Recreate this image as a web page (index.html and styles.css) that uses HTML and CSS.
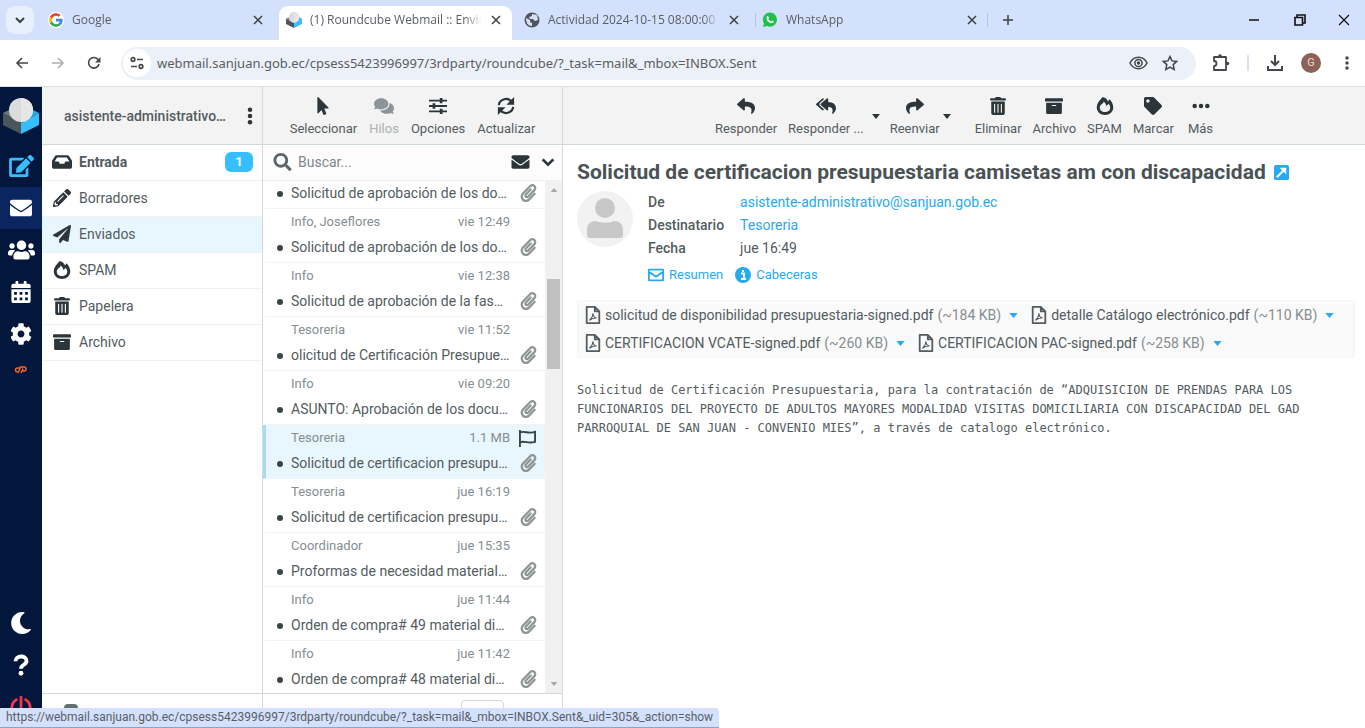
FILE: index.html
```html
<!DOCTYPE html>
<html lang="es">

<head>
    <meta charset="UTF-8">
    <meta name="viewport" content="width=device-width, initial-scale=1.0">
    <title>(1) Roundcube Webmail :: Enviados</title>
    <link rel="stylesheet" href="styles.css">
</head>

<body>
    <!-- iconos -->
    <svg class="sprite" aria-hidden="true">
        <symbol id="i-envelope" viewBox="0 0 512 512"><path d="M502.3 190.8c3.9-3.1 9.7-.2 9.7 4.7V400c0 26.5-21.5 48-48 48H48c-26.5 0-48-21.5-48-48V195.6c0-5 5.7-7.8 9.7-4.7 22.4 17.4 52.1 39.5 154.1 113.6 21.1 15.4 56.7 47.8 92.2 47.6 35.7.3 72-32.8 92.3-47.6 102-74.1 131.6-96.3 154-113.7zM256 320c23.2.4 56.6-29.2 73.4-41.4 132.7-96.3 142.8-104.7 173.4-128.7 5.8-4.5 9.2-11.5 9.2-18.9v-19c0-26.5-21.5-48-48-48H48c-26.5 0-48 21.5-48 48v19c0 7.4 3.4 14.3 9.2 18.9 30.6 23.9 40.7 32.4 173.4 128.7 16.8 12.2 50.2 41.8 73.4 41.4z"/></symbol>
        <symbol id="i-edit" viewBox="0 0 576 512"><path d="M402.6 83.2l90.2 90.2c3.8 3.8 3.8 10 0 13.8L274.4 405.6l-92.8 10.3c-12.4 1.4-22.9-9.1-21.5-21.5l10.3-92.8L388.8 83.2c3.8-3.8 10-3.8 13.8 0zm162-22.9l-48.8-48.8c-15.2-15.2-39.9-15.2-55.2 0l-35.4 35.4c-3.8 3.8-3.8 10 0 13.8l90.2 90.2c3.8 3.8 10 3.8 13.8 0l35.4-35.4c15.2-15.3 15.2-40 0-55.2zM384 346.2V448H64V128h229.8c3.2 0 6.2-1.3 8.5-3.5l40-40c7.6-7.6 2.2-20.5-8.5-20.5H48C21.5 64 0 85.5 0 112v352c0 26.5 21.5 48 48 48h352c26.5 0 48-21.5 48-48V306.2c0-10.7-12.9-16-20.5-8.5l-40 40c-2.2 2.3-3.5 5.3-3.5 8.5z"/></symbol>
        <symbol id="i-users" viewBox="0 0 640 512"><path d="M96 224c35.300 0 64-28.700 64-64s-28.700-64-64-64-64 28.700-64 64 28.700 64 64 64zm448 0c35.300 0 64-28.700 64-64s-28.700-64-64-64-64 28.700-64 64 28.700 64 64 64zm32 32h-64c-17.600 0-33.500 7.100-45.100 18.600 40.300 22.100 68.900 62 75.100 109.400h66c17.700 0 32-14.300 32-32v-32c0-35.300-28.700-64-64-64zm-256 0c61.900 0 112-50.100 112-112S381.900 32 320 32 208 82.100 208 144s50.100 112 112 112zm76.800 32h-8.300c-20.800 10-43.900 16-68.500 16s-47.600-6-68.500-16h-8.300C179.600 288 128 339.600 128 403.200V432c0 26.500 21.500 48 48 48h288c26.500 0 48-21.500 48-48v-28.800c0-63.600-51.600-115.200-115.200-115.200zm-223.700-13.400C161.500 263.100 145.600 256 128 256H64c-35.300 0-64 28.700-64 64v32c0 17.700 14.300 32 32 32h65.900c6.300-47.400 34.900-87.300 75.200-109.400z"/></symbol>
        <symbol id="i-calendar" viewBox="0 0 448 512"><path fill-rule="evenodd" d="M48 64h48V16c0-9 7-16 16-16h32c9 0 16 7 16 16v48h128V16c0-9 7-16 16-16h32c9 0 16 7 16 16v48h48c26 0 48 22 48 48v48H0v-48c0-26 22-48 48-48zM0 192h448v272c0 26-22 48-48 48H48c-26 0-48-22-48-48zM64 256v64h64v-64zm128 0v64h64v-64zm128 0v64h64v-64zM64 384v64h64v-64zm128 0v64h64v-64zm128 0v64h64v-64z"/></symbol>
        <symbol id="i-cog" viewBox="0 0 512 512"><path d="M487.4 315.7l-42.6-24.6c4.3-23.2 4.3-47 0-70.2l42.6-24.6c4.900-2.800 7.100-8.600 5.500-14-11.100-35.600-30-67.800-54.700-94.600-3.800-4.100-10-5.100-14.800-2.300L380.800 110c-17.900-15.400-38.500-27.300-60.800-35.100V25.800c0-5.600-3.900-10.500-9.400-11.700-36.700-8.200-74.300-7.800-109.200 0-5.500 1.200-9.400 6.100-9.400 11.700V75c-22.200 7.900-42.800 19.800-60.800 35.100L88.700 85.500c-4.900-2.800-11-1.900-14.800 2.300-24.700 26.700-43.600 58.900-54.700 94.600-1.700 5.400.6 11.200 5.500 14L67.300 221c-4.300 23.200-4.300 47 0 70.200l-42.600 24.600c-4.900 2.800-7.100 8.600-5.500 14 11.100 35.600 30 67.800 54.700 94.600 3.800 4.100 10 5.100 14.800 2.300l42.600-24.600c17.900 15.400 38.500 27.300 60.800 35.100v49.200c0 5.600 3.900 10.500 9.400 11.700 36.700 8.200 74.300 7.800 109.200 0 5.500-1.200 9.400-6.100 9.400-11.700v-49.200c22.200-7.900 42.800-19.800 60.800-35.100l42.600 24.600c4.900 2.800 11 1.900 14.800-2.300 24.700-26.700 43.600-58.900 54.700-94.600 1.500-5.500-.7-11.300-5.600-14.100zM256 336c-44.100 0-80-35.900-80-80s35.900-80 80-80 80 35.900 80 80-35.900 80-80 80z"/></symbol>
        <symbol id="i-moon" viewBox="0 0 512 512"><path d="M283.211 512c78.962 0 151.079-35.925 198.857-94.792 7.068-8.708-.639-21.430-11.562-19.350-124.203 23.654-238.262-71.576-238.262-196.954 0-72.222 38.662-138.635 101.498-174.394 9.686-5.512 7.250-20.197-3.756-22.230A258.156 258.156 0 0 0 283.211 0c-141.309 0-256 114.511-256 256 0 141.309 114.511 256 256 256z"/></symbol>
        <symbol id="i-question" viewBox="0 0 24 24"><path d="M6 8c0-7 12-7 12-.5 0 4.500-6 4-6 8.500" fill="none" stroke="currentColor" stroke-width="4.200"/><circle cx="12" cy="21" r="2.600"/></symbol>
        <symbol id="i-power" viewBox="0 0 24 24"><path d="M7 4a10 10 0 1 0 10 0M12 1v11" fill="none" stroke="currentColor" stroke-width="3" stroke-linecap="round"/></symbol>
        <symbol id="i-cpanel" viewBox="0 0 28 18"><path d="M12 5H7a4 4 0 0 0 0 8h2l4-10h7a4 4 0 0 1 0 8h-3M14 15l4-9" fill="none" stroke="currentColor" stroke-width="3"/></symbol>
        <symbol id="i-inbox" viewBox="0 0 576 512"><path fill-rule="evenodd" d="M128 64h320c16 0 30 8 39 21l81 122c5 8 8 17 8 27v166c0 27-21 48-48 48H48c-27 0-48-21-48-48V234c0-10 3-19 8-27L89 85c9-13 23-21 39-21zm17 64L77 240h115l32 64h128l32-64h115l-68-112z"/></symbol>
        <symbol id="i-pencil" viewBox="0 0 512 512"><path d="M497.900 142.100l-46.100 46.100c-4.700 4.700-12.300 4.700-17 0l-111-111c-4.700-4.700-4.700-12.300 0-17l46.100-46.100c18.700-18.700 49.100-18.700 67.900 0l60.100 60.100c18.800 18.700 18.800 49.100 0 67.900z"/><path fill-rule="evenodd" d="M284 100L22 362 .4 484c-3 16 11 31 28 28l121-22 263-262c5-5 5-12 0-17l-111-111c-5-5-13-5-17 0zM124 340l154-154c14-14 34 6 20 20L144 360c-14 14-34-6-20-20zM88 424h48v36l-65 12-31-31 12-65h36z"/></symbol>
        <symbol id="i-plane" viewBox="0 0 512 512"><path d="M476 3.200L12.500 270.600c-18.100 10.400-15.800 35.600 2.200 43.200L121 358.400l287.300-253.200c5.500-4.900 13.300 2.600 8.600 8.300L176 407v80.500c0 23.600 28.500 32.900 42.500 15.800L282 426l124.600 52.200c14.200 6 30.400-2.900 33-18.200l72-432C515 7.800 493.300-6.800 476 3.200z"/></symbol>
        <symbol id="i-fire" viewBox="0 0 24 24"><path fill-rule="evenodd" d="M9 0c4 1 6 3 7 6l2-3c3 3 5 7 5 11 0 6-5 10-11 10S1 20 1 14C1 9 4 5 9 0zM8 9c-2 2-3 3-3 5 0 4 3 6 7 6s7-2 7-6c0-2-1-3-2-5l-3 3c-1-3-2-5-4-6 0 2-1 3-2 3z"/></symbol>
        <symbol id="i-trash" viewBox="0 0 448 512"><path d="M32 464a48 48 0 0 0 48 48h288a48 48 0 0 0 48-48V128H32zm272-256a16 16 0 0 1 32 0v224a16 16 0 0 1-32 0zm-96 0a16 16 0 0 1 32 0v224a16 16 0 0 1-32 0zm-96 0a16 16 0 0 1 32 0v224a16 16 0 0 1-32 0zM432 32H312l-9.400-18.700A24 24 0 0 0 281.100 0H166.800a23.720 23.720 0 0 0-21.400 13.300L136 32H16A16 16 0 0 0 0 48v32a16 16 0 0 0 16 16h416a16 16 0 0 0 16-16V48a16 16 0 0 0-16-16z"/></symbol>
        <symbol id="i-archive" viewBox="0 0 512 512"><path d="M32 448c0 17.700 14.300 32 32 32h384c17.700 0 32-14.300 32-32V160H32v288zm160-212c0-6.600 5.400-12 12-12h104c6.600 0 12 5.400 12 12v8c0 6.600-5.400 12-12 12H204c-6.600 0-12-5.400-12-12v-8zM480 32H32C14.300 32 0 46.300 0 64v48c0 8.800 7.200 16 16 16h480c8.800 0 16-7.200 16-16V64c0-17.700-14.300-32-32-32z"/></symbol>
        <symbol id="i-pointer" viewBox="0 0 320 512"><path d="M302.189 329.126H196.105l55.831 135.993c3.889 9.428-.555 19.999-9.444 23.999l-49.165 21.427c-9.165 4-19.443-.571-23.332-9.714l-53.053-129.136-86.664 89.138C18.729 472.710 0 463.554 0 447.977V18.299C0 1.899 19.921-6.096 30.277 5.443l284.412 292.542c11.472 11.179 3.007 31.141-12.500 31.141z"/></symbol>
        <symbol id="i-comments" viewBox="0 0 576 512"><path d="M416 192c0-88.400-93.100-160-208-160S0 103.600 0 192c0 34.300 14.100 65.900 38 92-13.400 30.200-35.500 54.200-35.800 54.500-2.200 2.300-2.800 5.700-1.500 8.700S4.800 352 8 352c36.600 0 66.900-12.300 88.700-25 32.200 15.700 70.300 25 111.300 25 114.900 0 208-71.600 208-160zm122 220c23.900-26 38-57.700 38-92 0-66.900-53.500-124.200-129.300-148.100.9 6.600 1.300 13.300 1.300 20.100 0 105.900-107.700 192-240 192-10.800 0-21.300-.8-31.700-1.900C207.800 439.600 281.800 480 368 480c41 0 79.100-9.200 111.300-25 21.800 12.700 52.100 25 88.700 25 3.200 0 6.100-1.900 7.300-4.800 1.300-2.900.7-6.300-1.500-8.700-.3-.3-22.400-24.200-35.800-54.500z"/></symbol>
        <symbol id="i-sliders" viewBox="0 0 20 20"><path d="M0 4h20M0 10h20M0 16h20" stroke="currentColor" stroke-width="2"/><path d="M12 1h3v6h-3zM4 7h3v6H4zM12 13h3v6h-3z"/></symbol>
        <symbol id="i-sync" viewBox="0 0 20 20"><path d="M2 9c1-7 10-9 14-4l2 2M18 11c-1 7-10 9-14 4l-2-2" fill="none" stroke="currentColor" stroke-width="2.500"/><path d="M19 0v8.500h-8.500zM1 20v-8.500h8.500z"/></symbol>
        <symbol id="i-reply" viewBox="0 0 512 512"><path d="M8.309 189.836L184.313 37.851C199.719 24.546 224 35.347 224 56.015v80.053c160.629 1.839 288 34.032 288 186.258 0 61.441-39.581 122.309-83.333 154.132-13.653 9.931-33.111-2.533-28.077-18.631 45.344-145.012-21.507-183.510-176.590-185.742V360c0 20.700-24.300 31.453-39.687 18.164l-176.004-152c-11.071-9.562-11.086-26.753 0-36.328z"/></symbol>
        <symbol id="i-reply-all" viewBox="0 0 576 512"><path d="M136.309 189.836L312.313 37.851C327.720 24.546 352 35.348 352 56.015v82.763c129.182 10.231 224 52.212 224 183.548 0 61.441-39.582 122.309-83.333 154.132-13.653 9.931-33.111-2.533-28.077-18.631 38.512-123.162-3.922-169.482-112.590-182.015v84.175c0 20.701-24.300 31.453-39.687 18.164L136.309 226.164c-11.071-9.561-11.086-26.753 0-36.328zm-128 36.328L184.313 378.150C199.700 391.439 224 380.687 224 359.986v-15.818l-108.606-93.785A55.960 55.960 0 0 1 96 207.998a55.953 55.953 0 0 1 19.393-42.380L224 71.832V56.015c0-20.667-24.280-31.469-39.687-18.164L8.309 189.836c-11.086 9.575-11.071 26.767 0 36.328z"/></symbol>
        <symbol id="i-forward" viewBox="0 0 512 512"><use href="#i-reply" width="512" height="512" transform="matrix(-1 0 0 1 512 0)"/></symbol>
        <symbol id="i-tag" viewBox="0 0 512 512"><path d="M0 252.118V48C0 21.490 21.490 0 48 0h204.118a48 48 0 0 1 33.941 14.059l211.882 211.882c18.745 18.745 18.745 49.137 0 67.882L293.823 497.941c-18.745 18.745-49.137 18.745-67.882 0L14.059 286.059A48 48 0 0 1 0 252.118zM112 64c-26.510 0-48 21.490-48 48s21.490 48 48 48 48-21.490 48-48-21.490-48-48-48z"/></symbol>
        <symbol id="i-dots" viewBox="0 0 20 20"><circle cx="3" cy="10" r="2.500"/><circle cx="10" cy="10" r="2.500"/><circle cx="17" cy="10" r="2.500"/></symbol>
        <symbol id="i-vdots" viewBox="0 0 20 20"><circle cx="10" cy="3" r="2.500"/><circle cx="10" cy="10" r="2.500"/><circle cx="10" cy="17" r="2.500"/></symbol>
        <symbol id="i-search" viewBox="0 0 512 512"><path d="M505 442.700L405.300 343c-4.500-4.500-10.600-7-17-7H372c27.600-35.300 44-79.700 44-128C416 93.100 322.900 0 208 0S0 93.100 0 208s93.100 208 208 208c48.300 0 92.700-16.400 128-44v16.300c0 6.400 2.500 12.500 7 17l99.700 99.700c9.400 9.400 24.600 9.400 33.900 0l28.300-28.300c9.400-9.400 9.400-24.600.1-34zM208 336c-70.700 0-128-57.200-128-128 0-70.700 57.200-128 128-128 70.700 0 128 57.200 128 128 0 70.700-57.200 128-128 128z"/></symbol>
        <symbol id="i-chevron" viewBox="0 0 12 12"><path d="M2 4l4 4 4-4" fill="none" stroke="currentColor" stroke-width="2"/></symbol>
        <symbol id="i-clip" viewBox="0 0 448 512"><path d="M43.246 466.142c-58.430-60.289-57.341-157.511 1.386-217.581L254.392 34c44.316-45.332 116.351-45.336 160.671 0 43.890 44.894 43.943 117.329 0 162.276L232.214 383.128c-29.855 30.537-78.633 30.111-107.982-.998-28.275-29.970-27.368-77.473 1.452-106.953l143.743-146.835c6.182-6.314 16.312-6.422 22.626-.241l22.861 22.379c6.315 6.182 6.422 16.312.241 22.626L171.427 319.927c-4.932 5.045-5.236 13.428-.648 18.292 4.372 4.634 11.245 4.711 15.688.165l182.849-186.851c19.613-20.062 19.613-52.725-.011-72.798-19.189-19.627-49.957-19.637-69.154 0L90.390 293.295c-34.763 35.560-35.299 93.120-1.191 128.313 34.010 35.093 88.985 35.137 123.058.286l172.060-175.999c6.177-6.319 16.307-6.433 22.626-.256l22.877 22.364c6.319 6.177 6.434 16.307.256 22.626l-172.060 175.998c-59.576 60.938-155.943 60.216-214.770-.485z"/></symbol>
        <symbol id="i-flag" viewBox="0 0 20 18"><path d="M2 0v18M2 2.500c5-2 9 2 16-.5v10.500c-7 2.500-11-1.500-16 .5" fill="none" stroke="currentColor" stroke-width="2"/></symbol>
        <symbol id="i-pdf" viewBox="0 0 16 20"><path d="M1 1h9l5 5v13H1zM10 1v5h5" fill="none" stroke="currentColor" stroke-width="2" stroke-linejoin="round"/><path d="M4 16c2-2 4-5 4-8 0 4 2 5 4 5-3 0-6 1-8 3z" fill="none" stroke="currentColor" stroke-width="1.200"/></symbol>
        <symbol id="i-mail-line" viewBox="0 0 18 14"><path d="M1 1h16v12H1zM1 3l8 6 8-6" fill="none" stroke="currentColor" stroke-width="2" stroke-linejoin="round"/></symbol>
        <symbol id="i-info" viewBox="0 0 16 16"><circle cx="8" cy="8" r="8"/><path d="M6 6.500h3V12M6 12h5M7 4h2" stroke="#fff" stroke-width="1.800" fill="none"/></symbol>
        <symbol id="i-ext" viewBox="0 0 16 16"><rect width="16" height="16" rx="2"/><path d="M3 13l7-7" stroke="#fff" stroke-width="2.200"/><path d="M6 3h7v7z" fill="#fff"/></symbol>
        <symbol id="i-caret" viewBox="0 0 10 6"><path d="M0 0h10L5 6z"/></symbol>
        <symbol id="i-close" viewBox="0 0 12 12"><path d="M2 2l8 8M10 2l-8 8" stroke="currentColor" stroke-width="1.500"/></symbol>
        <symbol id="i-left" viewBox="0 0 14 14"><path d="M13 7H2M7 2L2 7l5 5" fill="none" stroke="currentColor" stroke-width="1.600"/></symbol>
        <symbol id="i-right" viewBox="0 0 14 14"><path d="M1 7h11M7 2l5 5-5 5" fill="none" stroke="currentColor" stroke-width="1.600"/></symbol>
        <symbol id="i-reload" viewBox="0 0 14 14"><path d="M12 8a5.300 5.300 0 1 1-1-4.500l1.500 1.500" fill="none" stroke="currentColor" stroke-width="1.600"/><path d="M13.500 1v5.500H8z"/></symbol>
        <symbol id="i-tune" viewBox="0 0 14 14"><g fill="none" stroke="currentColor" stroke-width="1.700"><circle cx="3" cy="3.500" r="1.800"/><path d="M7 3.500h6M1 10.500h6"/><circle cx="11" cy="10.500" r="1.800"/></g></symbol>
        <symbol id="i-eye" viewBox="0 0 20 14"><g fill="none" stroke="currentColor" stroke-width="1.600"><path d="M1 7c4-8 14-8 18 0-4 8-14 8-18 0z"/><circle cx="10" cy="7" r="3.800"/></g><circle cx="10" cy="7" r="1.800"/></symbol>
        <symbol id="i-star" viewBox="0 0 16 16"><path d="M8 1.500l2 4.400 4.700.5-3.500 3.200 1 4.800L8 12l-4.200 2.400 1-4.800L1.300 6.400 6 5.900z" fill="none" stroke="currentColor" stroke-width="1.500"/></symbol>
        <symbol id="i-puzzle" viewBox="0 0 18 18"><path d="M2 3h12v13H2v-4a2.500 2.500 0 0 0 0-5z" fill="none" stroke="currentColor" stroke-width="1.800" stroke-linejoin="round"/><circle cx="8" cy="2" r="1.800"/><circle cx="15.500" cy="9.500" r="1.800"/></symbol>
        <symbol id="i-download" viewBox="0 0 18 18"><path d="M9 1v9M5 7l4 4 4-4M2 12v4h14v-4" fill="none" stroke="currentColor" stroke-width="2"/></symbol>
        <symbol id="i-cube" viewBox="0 0 36 36"><path d="M0 15l18 10v11L0 27z" fill="#49575c"/><path d="M36 15L18 25v11l18-9z" fill="#37beff"/><path d="M0 15l8-4 10 8v6z" fill="#6b797e"/><path d="M36 15l-8-4-10 8v6z" fill="#2aa9e8"/><circle cx="18" cy="12" r="12" fill="#dcdcdc"/><path d="M18 0a12 12 0 0 1 0 24z" fill="#e6e6e6"/></symbol>
        <symbol id="i-google" viewBox="0 0 48 48"><path fill="#ea4335" d="M24 9.500c3.540 0 6.710 1.220 9.210 3.600l6.850-6.850C35.900 2.380 30.470 0 24 0 14.620 0 6.510 5.380 2.560 13.220l7.980 6.190C12.430 13.720 17.740 9.500 24 9.500z"/><path fill="#4285f4" d="M46.980 24.550c0-1.570-.15-3.090-.38-4.550H24v9.020h12.940c-.58 2.960-2.260 5.480-4.780 7.180l7.730 6c4.510-4.180 7.090-10.360 7.090-17.650z"/><path fill="#fbbc05" d="M10.530 28.590c-.48-1.450-.76-2.990-.76-4.590s.27-3.140.76-4.590l-7.980-6.190C.92 16.460 0 20.120 0 24c0 3.880.92 7.540 2.560 10.780l7.970-6.190z"/><path fill="#34a853" d="M24 48c6.480 0 11.930-2.130 15.890-5.810l-7.730-6c-2.150 1.450-4.920 2.300-8.160 2.300-6.260 0-11.570-4.220-13.470-9.910l-7.980 6.190C6.510 42.620 14.620 48 24 48z"/></symbol>
        <symbol id="i-globe" viewBox="0 0 16 16"><circle cx="8" cy="8" r="7.500" fill="#50565c"/><path d="M2 6l4 2v2l2 1v3c-4 0-6-3-6-8zM8 2l5 1 1 5-3 1-2-2H6l-1-2 3-1z" fill="#d3e1fd"/></symbol>
        <symbol id="i-whatsapp" viewBox="0 0 16 16"><path d="M1 15l1-3.600A7 7 0 1 1 5 14z" fill="#20c148"/><path d="M5 4.500c1-1 1.500 0 2 1.300L6.300 7c.6 1.200 1.400 2 2.700 2.600l1-1c1.500.5 2.300 1 1.500 2-3 2.500-8.500-2.600-6.500-6.100z" fill="#fff"/></symbol>
    </svg>

    <!-- navegador -->
    <div class="tabs">
        <button class="tab-search" aria-label="Buscar pestañas"><svg><use href="#i-chevron"/></svg></button>
        <div class="tab"><svg class="fav fav-white"><use href="#i-google"/></svg><span>Google</span><button aria-label="Cerrar"><svg><use href="#i-close"/></svg></button></div>
        <div class="tab active"><svg class="fav"><use href="#i-cube"/></svg><span>(1) Roundcube Webmail :: Enviados</span><button aria-label="Cerrar"><svg><use href="#i-close"/></svg></button></div>
        <div class="tab"><svg class="fav"><use href="#i-globe"/></svg><span>Actividad 2024-10-15 08:00:00 | Mi</span><button aria-label="Cerrar"><svg><use href="#i-close"/></svg></button></div>
        <div class="tab line"><svg class="fav"><use href="#i-whatsapp"/></svg><span>WhatsApp</span><button aria-label="Cerrar"><svg><use href="#i-close"/></svg></button></div>
        <button class="tab-new" aria-label="Nueva pestaña"><svg viewBox="0 0 12 12"><path d="M6 1v10M1 6h10" stroke="currentColor" stroke-width="1.500"/></svg></button>
        <div class="window-btns">
            <button aria-label="Minimizar"><svg viewBox="0 0 12 12"><path d="M1 6h10" stroke="currentColor" stroke-width="1.500"/></svg></button>
            <button aria-label="Restaurar"><svg viewBox="0 0 12 12"><path d="M1 3.500h7.500V11H1zM3 3.500V1h8v8H8.500" fill="none" stroke="currentColor" stroke-width="1.600"/></svg></button>
            <button aria-label="Cerrar ventana"><svg viewBox="0 0 12 12"><path d="M1 1l10 10M11 1L1 11" stroke="currentColor" stroke-width="1.200"/></svg></button>
        </div>
    </div>
    <div class="nav">
        <button aria-label="Atrás"><svg><use href="#i-left"/></svg></button>
        <button aria-label="Adelante" class="off"><svg><use href="#i-right"/></svg></button>
        <button aria-label="Recargar"><svg><use href="#i-reload"/></svg></button>
        <div class="omnibox">
            <button class="site" aria-label="Información del sitio"><svg><use href="#i-tune"/></svg></button>
            <input type="text" aria-label="Dirección" value="webmail.sanjuan.gob.ec/cpsess5423996997/3rdparty/roundcube/?_task=mail&amp;_mbox=INBOX.Sent">
            <button aria-label="Incógnito"><svg class="eye"><use href="#i-eye"/></svg></button>
            <button aria-label="Marcador"><svg class="star"><use href="#i-star"/></svg></button>
        </div>
        <div class="nav-right">
            <button aria-label="Extensiones"><svg><use href="#i-puzzle"/></svg></button>
            <i class="nav-sep"></i>
            <button aria-label="Descargas"><svg><use href="#i-download"/></svg></button>
            <button class="profile">G</button>
            <button aria-label="Menú"><svg class="kebab"><use href="#i-vdots"/></svg></button>
        </div>
    </div>

    <div class="app">
        <!-- menu de tareas -->
        <nav class="tasks">
            <a href="#" class="logo" aria-label="Roundcube"><svg><use href="#i-cube"/></svg></a>
            <a href="#" class="compose" aria-label="Redactar"><svg><use href="#i-edit"/></svg></a>
            <a href="#" class="selected" aria-label="Correo"><svg><use href="#i-envelope"/></svg></a>
            <a href="#" class="wide" aria-label="Contactos"><svg><use href="#i-users"/></svg></a>
            <a href="#" aria-label="Calendario"><svg><use href="#i-calendar"/></svg></a>
            <a href="#" aria-label="Configuración"><svg><use href="#i-cog"/></svg></a>
            <a href="#" class="cpanel" aria-label="cPanel"><svg><use href="#i-cpanel"/></svg></a>
            <a href="#" class="bottom" aria-label="Modo oscuro"><svg><use href="#i-moon"/></svg></a>
            <a href="#" aria-label="Acerca de"><svg><use href="#i-question"/></svg></a>
            <a href="#" class="logout" aria-label="Cerrar sesión"><svg><use href="#i-power"/></svg></a>
        </nav>

        <!-- carpetas -->
        <aside class="folders">
            <div class="header account">
                <b>asistente-administrativo@sanjuan</b>
                <button aria-label="Acciones"><svg><use href="#i-vdots"/></svg></button>
            </div>
            <ul class="pane">
                <li class="unread"><a href="#"><svg><use href="#i-inbox"/></svg>Entrada<span class="badge">1</span></a></li>
                <li><a href="#"><svg><use href="#i-pencil"/></svg>Borradores</a></li>
                <li class="current"><a href="#"><svg><use href="#i-plane"/></svg>Enviados</a></li>
                <li><a href="#"><svg><use href="#i-fire"/></svg>SPAM</a></li>
                <li><a href="#"><svg><use href="#i-trash"/></svg>Papelera</a></li>
                <li><a href="#"><svg><use href="#i-archive"/></svg>Archivo</a></li>
            </ul>
            <div class="footer"><i class="quota"></i></div>
        </aside>

        <!-- lista de mensajes -->
        <section class="list">
            <div class="header toolbar">
                <button><svg><use href="#i-pointer"/></svg>Seleccionar</button>
                <button disabled><svg><use href="#i-comments"/></svg>Hilos</button>
                <button><svg><use href="#i-sliders"/></svg>Opciones</button>
                <button><svg><use href="#i-sync"/></svg>Actualizar</button>
            </div>
            <div class="search">
                <label for="q" aria-label="Buscar"><svg><use href="#i-search"/></svg></label>
                <input id="q" type="text" placeholder="Buscar...">
                <button aria-label="No leídos"><svg><use href="#i-envelope"/></svg></button>
                <button aria-label="Opciones de búsqueda"><svg class="small"><use href="#i-chevron"/></svg></button>
            </div>
            <div class="pane scroller">
                <ul class="messages">
                    <li class="cut"><p class="subject"><a href="#">Solicitud de aprobación de los documentos</a><svg><use href="#i-clip"/></svg></p></li>
                    <li><p class="from"><span>Info, Joseflores</span><time>vie 12:49</time></p><p class="subject"><a href="#">Solicitud de aprobación de los documentos</a><svg><use href="#i-clip"/></svg></p></li>
                    <li><p class="from"><span>Info</span><time>vie 12:38</time></p><p class="subject"><a href="#">Solicitud de aprobación de la fase preparatoria</a><svg><use href="#i-clip"/></svg></p></li>
                    <li><p class="from"><span>Tesoreria</span><time>vie 11:52</time></p><p class="subject"><a href="#">olicitud de Certificación Presupuestaria</a><svg><use href="#i-clip"/></svg></p></li>
                    <li><p class="from"><span>Info</span><time>vie 09:20</time></p><p class="subject"><a href="#">ASUNTO: Aprobación de los documentos</a><svg><use href="#i-clip"/></svg></p></li>
                    <li class="current"><p class="from"><span>Tesoreria</span><span>1.1 MB</span><svg><use href="#i-flag"/></svg></p><p class="subject"><a href="#">Solicitud de certificacion presupuestaria</a><svg><use href="#i-clip"/></svg></p></li>
                    <li><p class="from"><span>Tesoreria</span><time>jue 16:19</time></p><p class="subject"><a href="#">Solicitud de certificacion presupuestaria</a><svg><use href="#i-clip"/></svg></p></li>
                    <li><p class="from"><span>Coordinador</span><time>jue 15:35</time></p><p class="subject"><a href="#">Proformas de necesidad material didactico</a><svg><use href="#i-clip"/></svg></p></li>
                    <li><p class="from"><span>Info</span><time>jue 11:44</time></p><p class="subject"><a href="#">Orden de compra# 49 material didactico</a><svg><use href="#i-clip"/></svg></p></li>
                    <li><p class="from"><span>Info</span><time>jue 11:42</time></p><p class="subject"><a href="#">Orden de compra# 48 material didactico</a><svg><use href="#i-clip"/></svg></p></li>
                </ul>
                <div class="scrollbar"><svg class="up"><use href="#i-caret"/></svg><i class="thumb"></i><svg><use href="#i-caret"/></svg></div>
            </div>
            <div class="footer"><i class="page"></i></div>
        </section>

        <!-- mensaje -->
        <main class="content">
            <div class="header toolbar">
                <button><svg><use href="#i-reply"/></svg>Responder</button>
                <button><svg><use href="#i-reply-all"/></svg>Responder ...</button>
                <button class="drop" aria-label="Opciones de respuesta"><svg><use href="#i-caret"/></svg></button>
                <button><svg><use href="#i-forward"/></svg>Reenviar</button>
                <button class="drop last" aria-label="Opciones de reenvío"><svg><use href="#i-caret"/></svg></button>
                <button><svg><use href="#i-trash"/></svg>Eliminar</button>
                <button><svg><use href="#i-archive"/></svg>Archivo</button>
                <button><svg><use href="#i-fire"/></svg>SPAM</button>
                <button><svg><use href="#i-tag"/></svg>Marcar</button>
                <button class="more"><svg><use href="#i-dots"/></svg>Más</button>
            </div>
            <article class="mail">
                <h1>Solicitud de certificacion presupuestaria camisetas am con discapacidad <a href="#" aria-label="Abrir en ventana nueva"><svg><use href="#i-ext"/></svg></a></h1>
                <div class="mail-head">
                    <svg class="avatar" viewBox="0 0 56 56"><circle cx="28" cy="28" r="28" fill="#f2f2f2"/><circle cx="28" cy="17" r="10" fill="#c8c8c8"/><path d="M10 44v-5c0-6 4-9 9-9 5 2 13 2 18 0 5 0 9 3 9 9v5q0 3-3 3H13q-3 0-3-3z" fill="#c8c8c8"/></svg>
                    <div>
                        <dl>
                            <dt>De</dt><dd><a href="#">asistente-administrativo@sanjuan.gob.ec</a></dd>
                            <dt>Destinatario</dt><dd><a href="#">Tesoreria</a></dd>
                            <dt>Fecha</dt><dd>jue 16:49</dd>
                        </dl>
                        <div class="links">
                            <a href="#"><svg><use href="#i-mail-line"/></svg>Resumen</a>
                            <a href="#"><svg><use href="#i-info"/></svg>Cabeceras</a>
                        </div>
                    </div>
                </div>
                <ul class="attachments">
                    <li><a href="#"><svg><use href="#i-pdf"/></svg>solicitud de disponibilidad presupuestaria-signed.pdf <span>(~184 KB)</span></a><button aria-label="Opciones"><svg><use href="#i-caret"/></svg></button></li>
                    <li><a href="#"><svg><use href="#i-pdf"/></svg>detalle Catálogo electrónico.pdf <span>(~110 KB)</span></a><button aria-label="Opciones"><svg><use href="#i-caret"/></svg></button></li>
                    <li><a href="#"><svg><use href="#i-pdf"/></svg>CERTIFICACION VCATE-signed.pdf <span>(~260 KB)</span></a><button aria-label="Opciones"><svg><use href="#i-caret"/></svg></button></li>
                    <li><a href="#"><svg><use href="#i-pdf"/></svg>CERTIFICACION PAC-signed.pdf <span>(~258 KB)</span></a><button aria-label="Opciones"><svg><use href="#i-caret"/></svg></button></li>
                </ul>
                <p class="body">Solicitud de Certificación Presupuestaria, para la contratación de “ADQUISICION DE PRENDAS PARA LOS FUNCIONARIOS DEL PROYECTO DE ADULTOS MAYORES MODALIDAD VISITAS DOMICILIARIA CON DISCAPACIDAD DEL GAD PARROQUIAL DE SAN JUAN - CONVENIO MIES”, a través de catalogo electrónico.</p>
            </article>
        </main>
    </div>
    <div class="status">https://webmail.sanjuan.gob.ec/cpsess5423996997/3rdparty/roundcube/?_task=mail&amp;_mbox=INBOX.Sent&amp;_uid=305&amp;_action=show</div>
</body>

</html>
```

FILE: styles.css
```css
* {
    margin: 0;
    padding: 0;
    box-sizing: border-box;
}

body {
    display: flex;
    flex-direction: column;
    height: 100vh;
    overflow: hidden;
    font: 14px/20px Roboto, sans-serif;
    color: #535c61;
    background: #fff;
}

li {
    list-style: none;
}

a {
    text-decoration: none;
    color: inherit;
}

button,
input {
    border: 0;
    background: none;
    font: inherit;
    color: inherit;
    outline: none;
}

svg {
    display: block;
    flex: none;
    fill: currentColor;
}

.sprite {
    position: absolute;
    width: 0;
    height: 0;
}

/* navegador */
.tabs {
    display: flex;
    flex: none;
    height: 40px;
    padding-left: 6px;
    background: #d3e1fd;
    font: 12px/16px "Open Sans", sans-serif;
    color: #5a5e63;
}

.tabs button {
    display: grid;
    place-items: center;
    color: #3c4043;
}

.tabs button svg {
    width: 12px;
    height: 12px;
}

.tabs .tab-search {
    width: 28px;
    height: 28px;
    margin: 6px 7px 0 0;
    border-radius: 9px;
    background: #e8effd;
}

.tab {
    display: flex;
    align-items: center;
    flex: 0 1 233px;
    min-width: 0;
    gap: 8px;
    height: 34px;
    margin: 6px 5px 0 0;
    padding: 0 10px 6px 7px;
}

.tab span {
    flex: 1;
    overflow: hidden;
    white-space: nowrap;
    -webkit-mask-image: linear-gradient(to right, #000 90%, transparent);
    mask-image: linear-gradient(to right, #000 90%, transparent);
}

.tab .fav {
    width: 16px;
    height: 16px;
}

.tab .fav-white {
    padding: 1px;
    border-radius: 50%;
    background: #fff;
}

.active {
    background: #fff;
    border-radius: 9px 9px 0 0;
}

.line {
    background: linear-gradient(#a9c6fb, #a9c6fb) right 7px / 1px 14px no-repeat, linear-gradient(#a9c6fb, #a9c6fb) left 7px / 1px 14px no-repeat;
}

.tabs .tab-new {
    width: 30px;
}

.window-btns {
    display: flex;
    margin-left: auto;
}

.window-btns button {
    width: 46px;
    color: #111;
}

.window-btns button:last-child {
    width: 42px;
}

.nav {
    display: flex;
    align-items: center;
    flex: none;
    height: 47px;
    padding: 0 10px 0 4px;
    border-bottom: 1px solid #dcdfe3;
    color: #44484c;
}

.nav button {
    display: grid;
    place-items: center;
    width: 28px;
    height: 28px;
}

.nav > button {
    width: 36px;
}

.nav svg {
    width: 14px;
    height: 14px;
}

.nav .off {
    color: #adb0b3;
}

.omnibox {
    display: flex;
    align-items: center;
    flex: 1;
    height: 33px;
    margin-left: 9px;
    padding: 0 8px 0 2px;
    border-radius: 17px;
    background: #ecf0f9;
}

.omnibox .site {
    border-radius: 50%;
    background: #fff;
}

.omnibox input {
    flex: 1;
    padding-left: 2px;
    font: 13px/20px "Noto Sans", sans-serif;
    color: #5a5e63;
}

.omnibox button {
    margin-right: 4px;
}

.omnibox .eye {
    width: 19px;
}

.omnibox .star {
    width: 16px;
    height: 16px;
}

.nav-right {
    display: flex;
    align-items: center;
    gap: 10px;
    padding-left: 11px;
}

.nav-right svg {
    width: 18px;
    height: 18px;
}

.nav-sep {
    width: 2px;
    height: 16px;
    margin: 0 2px;
    background: #d7e2f7;
}

.nav .profile {
    width: 20px;
    height: 20px;
    margin-left: 2px;
    border-radius: 50%;
    background: #8c6256;
    color: #e8dcd8;
    font-size: 11px;
}

.nav-right .kebab {
    width: 14px;
    height: 14px;
}

.nav-right button:last-child {
    width: 20px;
    margin-left: 6px;
    margin-right: -2px;
}

/* aplicacion */
.app {
    display: flex;
    flex: 1;
    min-height: 0;
}

.tasks {
    display: flex;
    flex-direction: column;
    flex: none;
    width: 42px;
    background: #03163c;
    color: #fff;
}

.tasks a {
    display: grid;
    place-items: center;
    flex: none;
    height: 42px;
}

.tasks svg {
    width: 22px;
    height: 22px;
}

.tasks .logo {
    height: 58px;
}

.tasks .logo svg {
    width: 36px;
    height: 36px;
}

.tasks .compose {
    color: #37beff;
}

.tasks .compose svg {
    width: 25px;
}

.tasks .wide svg {
    width: 27px;
}

.tasks .selected {
    background: #0b2561;
}

.tasks .cpanel {
    height: 30px;
    color: #f0672c;
}

.tasks .cpanel svg {
    width: 14px;
    height: 10px;
}

.tasks .bottom {
    margin-top: auto;
}

.tasks .logout {
    color: #f2384e;
}

.header {
    display: flex;
    flex: none;
    height: 58px;
    border-bottom: 1px solid #cfd8dc;
    background: #f3f3f3;
}

.folders,
.list {
    display: flex;
    flex-direction: column;
    flex: none;
    border-right: 1px solid #d5dade;
}

.folders {
    width: 221px;
}

.list {
    width: 300px;
}

.pane {
    flex: 1;
    min-height: 0;
}

.account {
    align-items: center;
    gap: 5px;
    padding: 0 3px 0 22px;
}

.account b {
    flex: 1;
    overflow: hidden;
    text-overflow: ellipsis;
    white-space: nowrap;
    font-weight: 500;
}

.account svg {
    width: 18px;
    height: 18px;
    color: #2c363a;
}

.folders li {
    height: 36px;
    border-bottom: 1px solid #eef1f2;
}

.folders li a {
    display: flex;
    align-items: center;
    gap: 7px;
    height: 100%;
    padding: 0 9px 2px 10px;
}

.folders li svg {
    width: 20px;
    height: 18px;
    color: #2c363a;
}

.unread {
    font-weight: 700;
}

.badge {
    margin-left: auto;
    width: 28px;
    border-radius: 6px;
    background: #37beff;
    color: #fff;
    font-size: 13px;
    text-align: center;
}

.current {
    background: #e8f6fd;
}

.footer {
    display: flex;
    flex: none;
    gap: 8px;
    height: 35px;
    border-top: 1px solid #cfd8dc;
}

.quota {
    width: 14px;
    height: 14px;
    margin: 10px 0 0 22px;
    border-radius: 4px;
    background: #66706f;
}

.page {
    width: 43px;
    height: 28px;
    margin: 6px 0 0 198px;
    border: 1px solid #d5dade;
    border-radius: 4px;
}

/* barras de botones */
.toolbar {
    justify-content: center;
    gap: 12px;
    font-size: 13px;
    line-height: 16px;
}

.content .toolbar {
    gap: 11px;
}

.toolbar button {
    display: flex;
    flex-direction: column;
    align-items: center;
    justify-content: center;
    gap: 6px;
    padding-top: 2px;
}

.toolbar svg {
    width: 20px;
    height: 18px;
    color: #2c363a;
}

.toolbar button:disabled {
    color: #abb1b4;
}

.toolbar button:disabled svg {
    color: #8d9497;
}

.toolbar .drop {
    margin: 0 -1px 0 -3px;
}

.toolbar .drop svg {
    width: 8px;
    height: 5px;
}

.toolbar .last {
    margin: 0 13px 0 -8px;
}

.toolbar .more {
    padding-left: 3px;
}

.search {
    display: flex;
    align-items: center;
    flex: none;
    height: 36px;
    padding: 0 6px 2px 10px;
    border-bottom: 1px solid #eef1f2;
    background: #fcfcfc;
    color: #2c363a;
}

.search label {
    color: #5c666a;
}

.search svg {
    width: 19px;
    height: 18px;
}

.search .small {
    width: 16px;
    height: 16px;
}

.search input {
    flex: 1;
    min-width: 0;
    padding-left: 6px;
}

.search input::placeholder {
    color: #7e878b;
}

.search button {
    margin-left: 10px;
}

.scroller {
    display: flex;
}

.messages {
    flex: 1;
    min-width: 0;
    overflow: hidden;
}

.messages li {
    height: 54px;
    padding: 4px 8px 0 25px;
    border-left: 3px solid transparent;
    border-bottom: 1px solid #f1f3f4;
}

.messages .cut {
    height: 28px;
    padding-top: 0;
}

.messages .current {
    border-left-color: #a4dcf6;
}

.messages p {
    display: flex;
    align-items: center;
}

.messages .from {
    height: 18px;
    justify-content: flex-end;
    padding-right: 27px;
    font-size: 13px;
    color: #868e92;
}

.from span:first-child {
    flex: 1;
}

.from svg {
    width: 19px;
    height: 17px;
    margin: 0 -27px 0 8px;
    color: #3a4448;
}

.subject {
    height: 32px;
    gap: 10px;
}

.cut .subject {
    height: 24px;
}

.subject a {
    flex: 1;
    overflow: hidden;
    white-space: nowrap;
    text-overflow: ellipsis;
}

.subject::before {
    content: "";
    flex: none;
    width: 6px;
    height: 6px;
    margin: 1px -2px 0 -14px;
    border-radius: 50%;
    background: #3a4448;
}

.subject svg {
    width: 17px;
    height: 18px;
    color: #8f9496;
}

.scrollbar {
    display: flex;
    flex-direction: column;
    align-items: center;
    flex: none;
    width: 17px;
    padding: 7px 0;
    background: #f1f1f1;
}

.scrollbar svg {
    width: 8px;
    height: 4px;
    color: #a9a9a9;
}

.scrollbar .up {
    transform: rotate(180deg);
}

.thumb {
    width: 13px;
    height: 90px;
    margin: 87px 0 auto;
    background: #c1c1c1;
}

/* mensaje */
.content {
    flex: 1;
    min-width: 0;
}

.mail {
    padding: 14px 10px 0 14px;
}

.mail h1 {
    display: flex;
    align-items: center;
    gap: 8px;
    height: 26px;
    font-size: 21px;
    font-weight: 700;
    color: #4a5256;
}

.mail a {
    color: #28a9f2;
}

.mail h1 svg {
    width: 15px;
    height: 15px;
}

.mail-head {
    display: flex;
    gap: 15px;
    padding-top: 6px;
}

.avatar {
    width: 56px;
    height: 56px;
}

.mail dl {
    display: grid;
    grid-template-columns: auto auto;
    gap: 0 16px;
    line-height: 23px;
}

.mail dt {
    font-weight: 500;
}

.links {
    display: flex;
    gap: 12px;
    padding-top: 5px;
    font-size: 13px;
}

.links a {
    display: flex;
    align-items: center;
    gap: 5px;
}

.links svg {
    width: 16px;
    height: 16px;
}

.attachments {
    display: flex;
    flex-wrap: wrap;
    column-gap: 13px;
    margin-top: 15px;
    padding: 0 7px;
    border: 1px solid #f6f6f6;
    background: #fafafa;
}

.attachments li {
    display: flex;
    align-items: center;
    gap: 8px;
    height: 28px;
}

.attachments a {
    display: flex;
    align-items: center;
    gap: 4px;
    color: #535c61;
}

.attachments a svg {
    width: 16px;
    height: 18px;
}

.attachments span {
    color: #878e91;
}

.attachments button svg {
    width: 9px;
    height: 5px;
    color: #28a9f2;
}

.body {
    margin-top: 23px;
    font: 12px/19px "DejaVu Sans Mono", monospace;
    padding-right: 14px;
}

/* enlace bajo el cursor */
.status {
    position: absolute;
    left: 0;
    bottom: 0;
    height: 20px;
    padding: 0 6px;
    border-bottom: 1px solid #8ea3c4;
    border-radius: 0 4px 0 0;
    background: #d3e1fd;
    font: 12px/19px Roboto, sans-serif;
    white-space: nowrap;
    color: #5a5f66;
}
```
